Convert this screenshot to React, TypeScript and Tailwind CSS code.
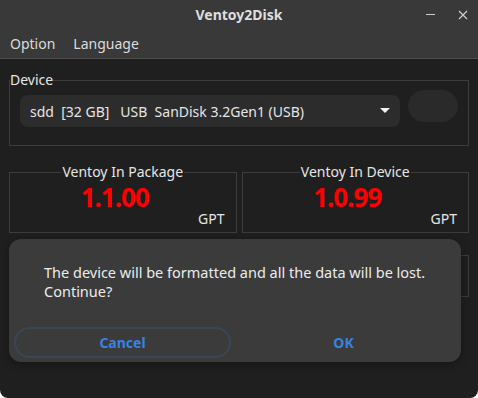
import React from 'react';

const font = { fontFamily: '"Noto Sans", "Open Sans", sans-serif' };

const VersionBox: React.FC<{ title: string; version: string }> = ({ title, version }) => (
  <fieldset className="flex-1 h-[71px] border border-[#3c3c3c] px-[11px]">
    <legend className="mx-auto px-[1px] text-[14px] leading-[20px] text-[#e6e6e6]">{title}</legend>
    <div className="pr-[16px] pt-[1px] text-center text-[26px] leading-[28px] font-bold text-[#ff0000] tracking-[-1px]">
      {version}
    </div>
    <div className="text-right text-[14px] leading-[16px] text-[#e6e6e6]">GPT</div>
  </fieldset>
);

export default function App() {
  return (
    <div className="relative w-[478px] h-[398px] bg-white overflow-hidden" style={font}>
      <div className="flex flex-col h-full rounded-b-[8px] bg-[#1f1f1f] overflow-hidden">
        {/* Title bar */}
        <div className="relative h-[29px] flex items-center justify-center bg-[#393939]">
          <span className="text-[14px] font-bold text-[#dedede]">Ventoy2Disk</span>
          <div className="absolute right-[10px] top-0 h-full flex items-center gap-[23px]">
            <span className="block w-[9px] h-[1px] bg-[#cfcfcf]" />
            <svg width="10" height="10" viewBox="0 0 10 10" className="text-[#cfcfcf]">
              <path d="M1 1 L9 9 M9 1 L1 9" stroke="currentColor" strokeWidth="1.2" />
            </svg>
          </div>
        </div>

        {/* Menu bar */}
        <div className="h-[30px] flex items-center gap-[18px] px-[10px] bg-[#393939] border-b border-[#4f4f4f] text-[14px] text-[#dcdcdc]">
          <span>Option</span>
          <span>Language</span>
        </div>

        {/* Body */}
        <div className="flex flex-col px-[9px]">
          <fieldset className="mt-[11px] h-[76px] border border-[#3c3c3c]">
            <legend className="text-[14px] leading-[20px] text-[#e6e6e6]">Device</legend>
            <div className="flex items-start gap-[8px] px-[10px]">
              <div className="mt-[5px] w-[380px] h-[32px] flex items-center justify-between rounded-[8px] bg-[#2c2c2c] pl-[10px] pr-[10px]">
                <span className="text-[14px] text-[#e6e6e6] whitespace-pre">sdd  [32 GB]   USB  SanDisk 3.2Gen1 (USB)</span>
                <svg width="10" height="6" viewBox="0 0 10 6"><path d="M0 0 H10 L5 5 Z" fill="#f2f2f2" /></svg>
              </div>
              <div className="w-[50px] h-[32px] rounded-full bg-[#2a2a2a]" />
            </div>
          </fieldset>

          <div className="mt-[16px] flex gap-[5px]">
            <VersionBox title="Ventoy In Package" version="1.1.00" />
            <VersionBox title="Ventoy In Device" version="1.0.99" />
          </div>

          <fieldset className="mt-[12px] h-[52px] border border-[#3c3c3c]">
            <legend className="px-[1px] text-[14px] leading-[20px] text-[#e6e6e6]">Status: READY</legend>
          </fieldset>

          <div className="mt-[24px] flex justify-between px-[89px]">
            <div className="w-[101px] h-[32px] rounded-[10px] bg-[#262626]" />
            <div className="w-[101px] h-[32px] rounded-[10px] bg-[#262626]" />
          </div>
        </div>
      </div>

      {/* Dialog */}
      <div className="absolute left-[9px] top-[239px] w-[452px] h-[123px] rounded-[12px] bg-[#3b3b3b] shadow-[0_2px_8px_rgba(0,0,0,0.35)] flex flex-col">
        <div className="pl-[35px] pt-[24px] text-[14.5px] leading-[19px] text-[#ececec]">
          <div>The device will be formatted and all the data will be lost.</div>
          <div>Continue?</div>
        </div>
        <div className="mt-auto mb-[4px] flex px-[5px]">
          <button className="w-[217px] h-[31px] rounded-full border-2 border-[#3a4655] text-[14px] font-bold text-[#3584e4]">
            Cancel
          </button>
          <button className="flex-1 h-[31px] text-[14px] font-bold text-[#3584e4]">OK</button>
        </div>
      </div>
    </div>
  );
}
